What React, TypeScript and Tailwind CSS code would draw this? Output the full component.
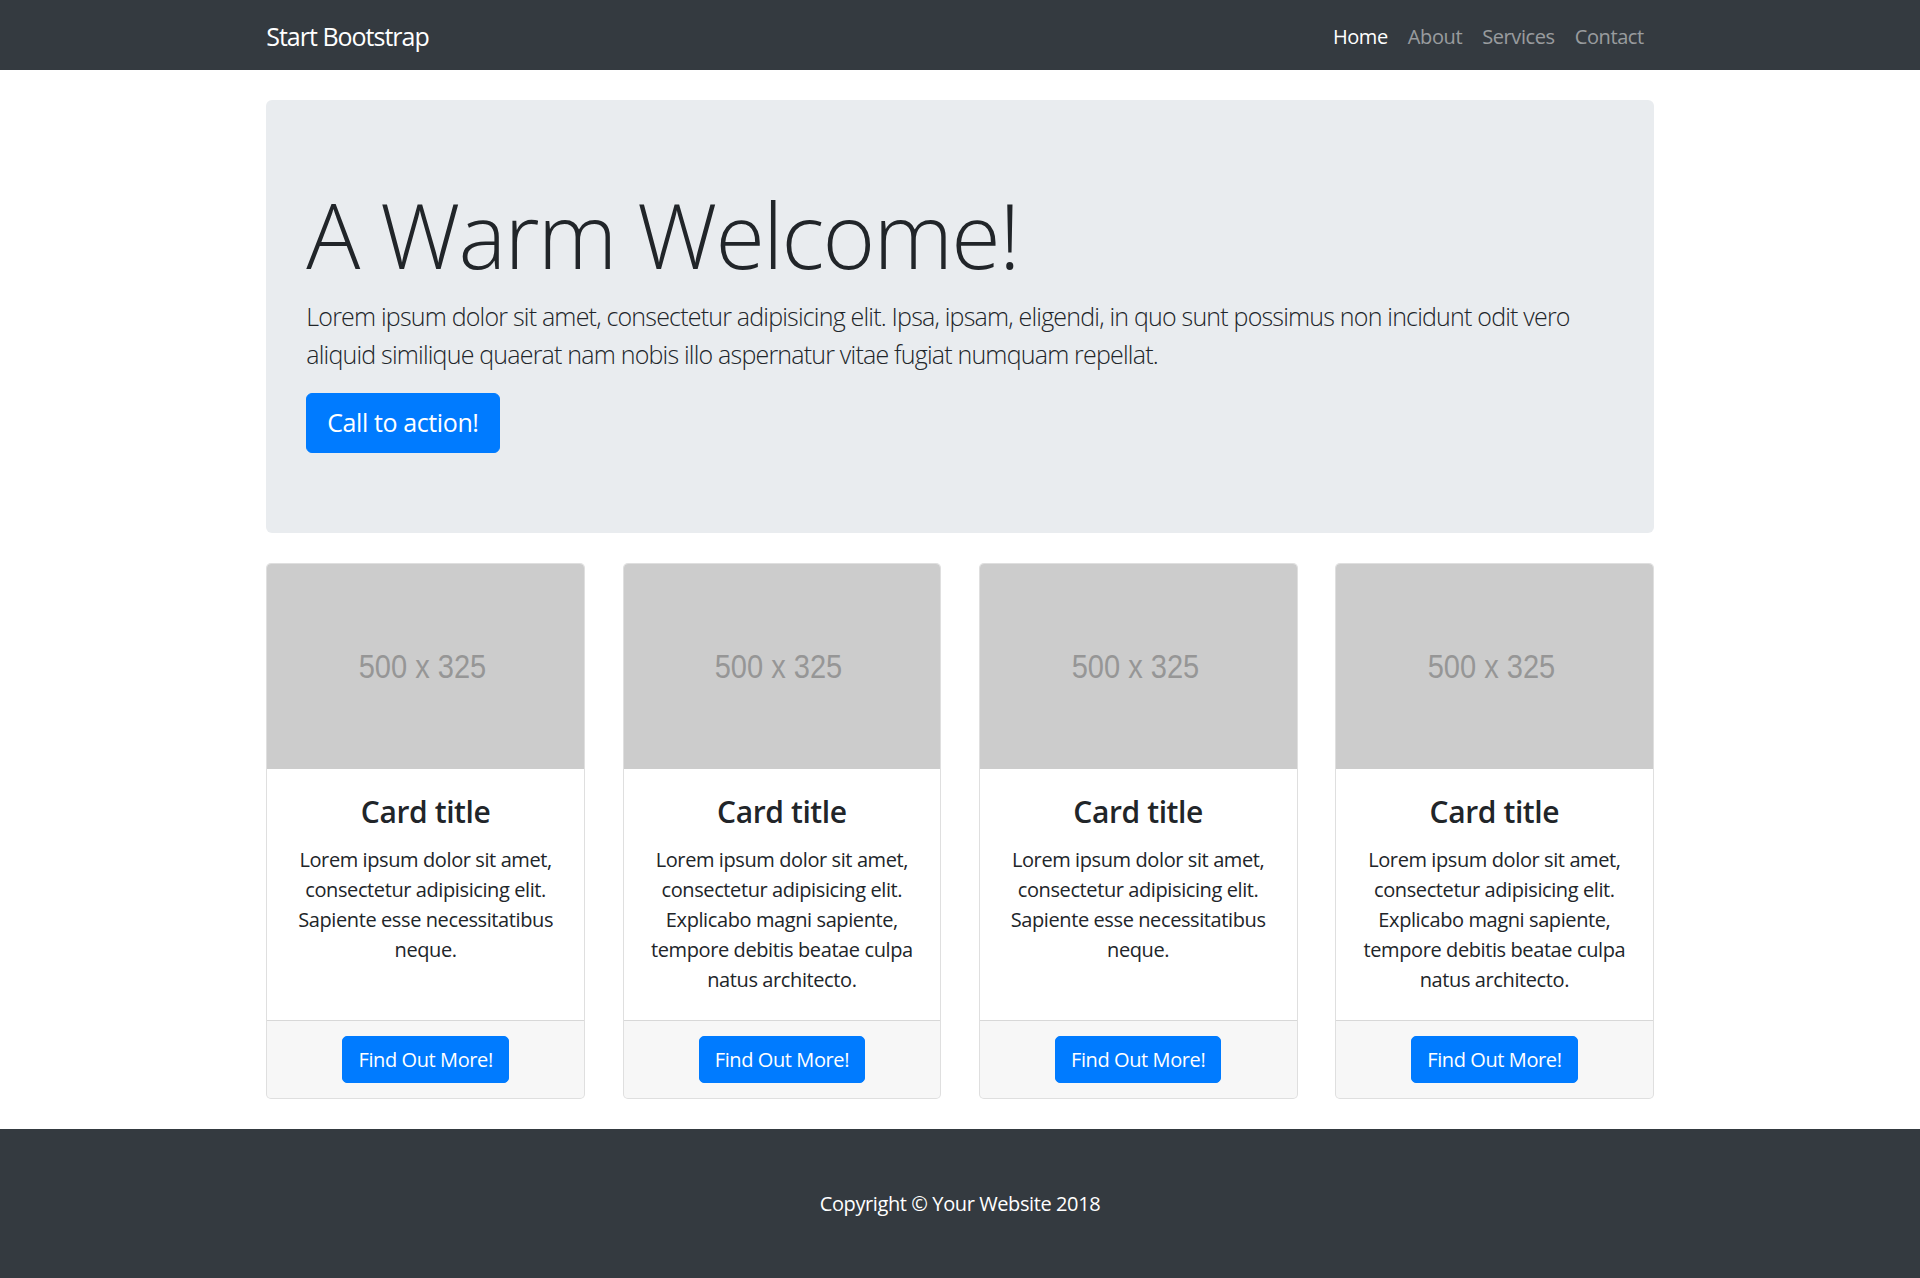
const NAV_LINKS = [
  { label: "Home", active: true },
  { label: "About" },
  { label: "Services" },
  { label: "Contact" },
];

const CARDS = [
  "Lorem ipsum dolor sit amet, consectetur adipisicing elit. Sapiente esse necessitatibus neque.",
  "Lorem ipsum dolor sit amet, consectetur adipisicing elit. Explicabo magni sapiente, tempore debitis beatae culpa natus architecto.",
  "Lorem ipsum dolor sit amet, consectetur adipisicing elit. Sapiente esse necessitatibus neque.",
  "Lorem ipsum dolor sit amet, consectetur adipisicing elit. Explicabo magni sapiente, tempore debitis beatae culpa natus architecto.",
];

function Placeholder() {
  return (
    <div className="flex aspect-[500/325] w-full items-center justify-center bg-[#cccccc]">
      <span className="inline-block -translate-x-[3px] scale-x-[0.88] font-['Liberation_Sans',Arial,sans-serif] text-[33px] leading-none tracking-normal text-[#969696]">
        500 x 325
      </span>
    </div>
  );
}

function Card({ text }: { text: string }) {
  return (
    <div className="flex flex-col overflow-hidden rounded-[5px] border border-black/[0.125] bg-white">
      <Placeholder />
      <div className="flex-1 p-[25px] text-center">
        <h4 className="mb-[15px] text-[30px] leading-[1.2] font-semibold">Card title</h4>
        <p className="text-[20px] leading-[1.5]">{text}</p>
      </div>
      <div className="border-t border-black/[0.125] bg-black/[0.03] px-[25px] py-[15px] text-center">
        <a
          href="#"
          className="inline-block rounded-[5px] border border-[#007bff] bg-[#007bff] px-[15px] py-[7.5px] text-[20px] leading-[1.5] text-white"
        >
          Find Out More!
        </a>
      </div>
    </div>
  );
}

export default function App() {
  return (
    <div className="min-h-screen bg-white font-['Open_Sans','Noto_Sans',sans-serif] tracking-[-0.025em] text-[#212529]">
      {/* Navigation */}
      <nav className="bg-[#343a40]">
        <div className="mx-auto flex h-[70px] max-w-[1425px] items-center justify-between px-[18.75px] pt-[3px]">
          <a href="#" className="text-[25px] leading-[1.5] tracking-[-0.04em] text-white">
            Start Bootstrap
          </a>
          <ul className="flex">
            {NAV_LINKS.map((link) => (
              <li key={link.label}>
                <a
                  href="#"
                  className={
                    link.active
                      ? "block px-[10px] py-[10px] text-[20px] leading-[1.5] text-white"
                      : "block px-[10px] py-[10px] text-[20px] leading-[1.5] text-white/50"
                  }
                >
                  {link.label}
                </a>
              </li>
            ))}
          </ul>
        </div>
      </nav>

      {/* Page content */}
      <div className="mx-auto max-w-[1425px] px-[18.75px]">
        <header className="my-[30px] rounded-[6px] bg-[#e9ecef] px-[40px] py-[80px]">
          <h1 className="mb-[10px] text-[90px] leading-[1.2] font-light tracking-[-0.02em]">
            A Warm Welcome!
          </h1>
          <p className="mb-[20px] text-[25px] leading-[1.5] font-light tracking-[-0.032em]">
            Lorem ipsum dolor sit amet, consectetur adipisicing elit. Ipsa, ipsam, eligendi, in quo
            sunt possimus non incidunt odit vero aliquid similique quaerat nam nobis illo aspernatur
            vitae fugiat numquam repellat.
          </p>
          <a
            href="#"
            className="inline-block rounded-[6px] border border-[#007bff] bg-[#007bff] px-[20px] py-[10px] text-[25px] leading-[1.5] text-white"
          >
            Call to action!
          </a>
        </header>

        <div className="grid grid-cols-4 gap-x-[37.5px] pb-[30px]">
          {CARDS.map((text, i) => (
            <Card key={i} text={text} />
          ))}
        </div>
      </div>

      {/* Footer */}
      <footer className="bg-[#343a40] py-[60px]">
        <p className="text-center text-[20px] leading-[1.5] text-white">
          Copyright &copy; Your Website 2018
        </p>
      </footer>
    </div>
  );
}
